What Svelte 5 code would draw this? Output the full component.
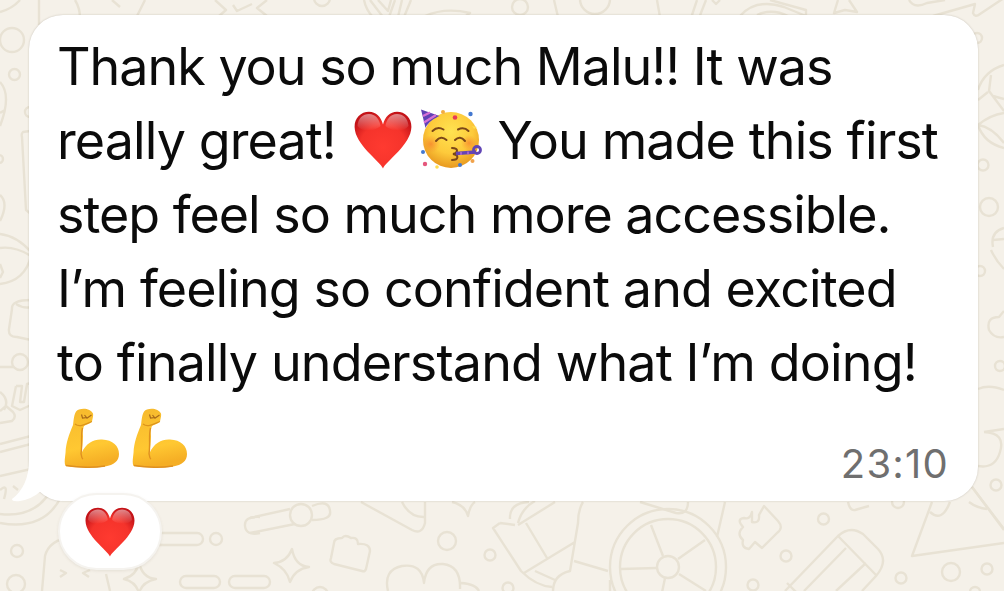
<script>
  const lines = [
    { spacing: -1, parts: [{ text: "Thank you so much Malu!! It was" }] },
    {
      spacing: -0.9,
      parts: [
        { text: "really great! " },
        { icon: "heart" },
        { icon: "party" },
        { text: " You made this first" },
      ],
    },
    { spacing: -1, parts: [{ text: "step feel so much more accessible." }] },
    { spacing: -0.91, parts: [{ text: "I’m feeling so confident and excited" }] },
    { spacing: -0.86, parts: [{ text: "to finally understand what I’m doing!" }] },
    { spacing: 0, parts: [{ icon: "arm" }, { icon: "arm" }] },
  ];

  const time = "23:10";

  // small circles of the wallpaper: x, y, radius
  const dots = [
    [12, 40, 12], [14.5, 74.5, 5.5], [30, 112, 5], [-1, 159, 4],
    [17, 551, 6], [16, 584, 9], [216, 539, 6], [447, 541, 9], [490, 555, 5.5],
    [508, 588, 5.5], [320, 595, 8], [823.5, 519, 5.5], [786, 556, 5.5],
    [753, 585, 5.5], [901, 578, 5.5], [951, 572, 9], [987, 569, 5.5],
    [898, 502, 6], [983, 165, 5.5], [989, 207, 9], [980, 271, 5],
    [1000, 366, 5], [996, 485, 5.5], [977, 38, 5], [322, -2, 8], [520, 7, 8],
    [595, -1, 15], [975, 592, 5],
  ];
</script>

{#snippet heart()}
  <svg class="heart" viewBox="0 0 58 58">
    <defs>
      <radialGradient id="heart-fill" cx="50%" cy="62%" r="62%">
        <stop offset="0" stop-color="#ff3a30" />
        <stop offset="0.65" stop-color="#f5332b" />
        <stop offset="1" stop-color="#c41318" />
      </radialGradient>
      <linearGradient id="heart-shine" x1="0" y1="0" x2="0" y2="1">
        <stop offset="0" stop-color="#fff" stop-opacity="0.5" />
        <stop offset="1" stop-color="#fff" stop-opacity="0" />
      </linearGradient>
    </defs>
    <path
      d="M29 57.5C26 50 1 34 .6 16 .4 7 7 .8 15 .8c7 0 12 5 14 12.600C31 5.800 36 .8 43 .8c8 0 14.600 6.200 14.400 15.200C57 34 32 50 29 57.500Z"
      fill="url(#heart-fill)" />
    <path
      d="M3.500 15C4 7 9 3 15 3c6.500 0 10.500 5 11.500 12-5 5-18 7-23 0ZM31.500 15C32.500 8 36.500 3 43 3c6 0 11 4 11.500 12-5 7-18 5-23 0Z"
      fill="url(#heart-shine)" />
  </svg>
{/snippet}

{#snippet party()}
  <svg class="party" viewBox="0 0 62 62">
    <defs>
      <radialGradient id="face-fill" cx="50%" cy="35%" r="65%">
        <stop offset="0" stop-color="#ffe351" />
        <stop offset="0.6" stop-color="#fdca3b" />
        <stop offset="1" stop-color="#e8981f" />
      </radialGradient>
      <radialGradient id="cheek">
        <stop offset="0" stop-color="#f6762c" stop-opacity="0.65" />
        <stop offset="1" stop-color="#f6862c" stop-opacity="0" />
      </radialGradient>
    </defs>
    <circle cx="31" cy="32" r="28" fill="url(#face-fill)" />
    <circle cx="11" cy="36" r="9" fill="url(#cheek)" />
    <circle cx="49" cy="35" r="8" fill="url(#cheek)" />
    <path d="M1 1.500 19.500 8C15 10 8 14 5.500 20Z" fill="#6042b5" />
    <path d="M3 8 10 4.500M4 14.500 16 7" stroke="#d770d6" stroke-width="2.200" />
    <g fill="none" stroke="#7b4718" stroke-width="2" stroke-linecap="round">
      <path d="M12.500 23q5-5 11-1.500M38 21.500q6-3 10.500 1.500" />
      <path d="M16 33q5-6 10.500-1M35 32q5-5 10 1" />
      <path d="M32 40c7 0 6 5 1 6 6 1 6 6-1 6" />
    </g>
    <path d="M36 45.500 56 44" stroke="#6744b4" stroke-width="3.600" />
    <circle cx="57" cy="42" r="3.500" fill="none" stroke="#6146b5" stroke-width="2.800" />
    <path d="M41 44v3M48 43.500v3" stroke="#b66bd1" stroke-width="1.500" />
    <circle cx="35" cy="9.500" r="2.300" fill="#e83b55" />
    <circle cx="50.500" cy="6" r="2.200" fill="#4478d0" />
    <circle cx="23" cy="4" r="2" fill="#f2ad43" />
    <path d="m52 18 5 1-3 2Z" fill="#ffdc4e" />
    <circle cx="3" cy="44" r="2" fill="#4478d0" />
    <circle cx="5" cy="56" r="2.200" fill="#e5577c" />
    <circle cx="40" cy="57" r="2" fill="#4478d0" />
    <circle cx="52.500" cy="53" r="2" fill="#f0a24b" />
    <circle cx="17" cy="59" r="1.800" fill="#ffdc4e" />
  </svg>
{/snippet}

{#snippet arm()}
  <svg class="arm" viewBox="0 0 56 60">
    <defs>
      <linearGradient id="skin" x1="0" y1="0" x2="0.2" y2="1">
        <stop offset="0" stop-color="#f6b92d" />
        <stop offset="0.7" stop-color="#ffc832" />
        <stop offset="1" stop-color="#f5ae25" />
      </linearGradient>
    </defs>
    <path
      d="M9 17C10 10 10 3 15 1.500c5-2 12-.5 14 4 .5 3-.5 5-1 8-2 2.500-5 2.500-8 4.500-1.500 4-1.500 6-1 10 0 6-1 12-1.500 17C22 35 30 31 38 31.500 49 32 55 38 55 46c0 7-5 11-14 12.500C31 60.500 12 59.500 1.500 58 0 55 1 50 1.500 45 2 34 5 27 9 17Z"
      fill="url(#skin)" />
    <path d="M18.500 20c-2 8 0 17-1.500 26 1 2 0 4 2 5M2 57.500c12 2 29 2 39 .5" fill="none" stroke="#df9020" stroke-width="1.400" />
    <path d="M11 16c5 4 10 0 17-2.500" fill="none" stroke="#dc941c" stroke-width="1.200" />
    <path d="M17.500 6.500 18.500 10l4-.5-2-2.500M22.500 10.500l5-3.500" fill="none" stroke="#a8691a" stroke-width="1.200" />
  </svg>
{/snippet}

<main>
  <svg class="wallpaper" viewBox="0 0 1004 591">
    {#each dots as [x, y, r]}
      <circle cx={x} cy={y} r={r} />
    {/each}

    <!-- top edge -->
    <path d="M0 12Q12 9 20 0M39 0v25M75 0q5 8 5 18M112 0l8 7M145 0l-8 16M215 0l11 10-7 6M267 0l-10 8 10 8M233 5l4 6 15-7" />
    <path d="M364 0q2 10 9 17M370 0l13 17M378 0l10 11 3-11M395 0l-6 17M402 0l-4 17M411 0l-7 17M425 16q20-9 45-3l-7 5" />
    <path d="M554 0l4 17M657 0l3 17M697 0l-6 18M706 0l-7 18M712 0l4 4 4-4M740 16q16-18 44-9l22 9M757 15q15-7 31 1M770 0l36 10v7M838 0l-4 13 11-3 12 2-8-12M909 0q5 9 18 3l18-3M933 16l42-12-2 9q2 5 7 1l24-16" />

    <!-- left edge -->
    <path d="M0 82q12 13 0 44M0 113l5-3M30 131l-7 1q-2 2-1 5l4 73 5 4M0 195q9 8 0 26M0 234q17 2 31 18" />
    <path d="M0 284q25-3 31-28-16-10-31-8M0 264l3 8-3 6M31 300q-20 0-19 9l-3 20q-1 8 8 8l14 3M16 304q8 5 15 3M0 367h13" />
    <circle cx="20" cy="362" r="8" />
    <path d="M0 392q10 8 4 18M16 386h6l-2 16h4l3-18 4-1M16 386l-4 20 8 4 11-5M0 411l6-5 7 6q4 5-1 9l-12 2M0 444l31-8M0 452l31-8M0 476l31-7M0 490q9-8 4 9M13 486l5 4M0 523q44 8 61-26M0 514q34 4 50-22" />

    <!-- right edge -->
    <path d="M1004 65q-20 6-26 25M1004 148q-20-5-26-23 12-10 26-12M991 75l-2 16 15 20M988 92l-10 8M993 96l11 3M978 125q14 2 26 18M1004 228q-14 4-11 19M1004 239l-11 1M991 250q5 11 13 19M1004 311l-5 6q-13 0-10 13 5 9 15 7M978 389q11-5 26 1M984 432q22 1 16 20-5 17-22 14M984 432l20-3M972 487l32 42" />

    <!-- bottom edge -->
    <rect x="150" y="533" width="53" height="12" rx="6" />
    <rect x="180" y="576" width="40" height="12" rx="6" />
    <rect x="229" y="576" width="41" height="12" rx="6" />
    <path d="M260 517q-16-1-15 9t15 7M42 591l3-35q4-16 26-19M60 570l6 3-6 4M90 570l-7 3 6 4M106 574l4 17M139 562q3 16 17 17-14 3-17 14-3-11-15-14 13-4 15-17Z" />
    <path d="M292 549q3 17 17 18-14 2-19 15-3-13-16-19 13-1 18-14ZM250 518l40-9M250 533l45-9M312 506q17-7 18 5 2 9-18 9" />
    <circle cx="301" cy="515" r="11" />
    <path d="M334 543q0-5 8-5 3-4 9 0 7-1 7 6 12-1 12 7l-4 18q-1 3-4 2l-28-7q-5-2-3-6Z" />
    <path d="M361 502l51 28q10 5 13-7v-21M402 502q8 16 23 15M452 502q13 3 16 14 2-11 7-14M388 591q-5-21 14-25 20-3 22 17 2-20 19-19 18 2 17 25M461 583q15 1 18 8M500 523l-7 5 28 43q15 15 31 16M500 523l15 2M510 519q-1-16 19-17M518 523q4-15 17-22M518 525l37-23M526 523l21 35M524 573l51-31M583 502q-5 8-5 21l-8 48q-17 4-17 20M574 561l34 10M535 571l20 9M640 502l36 11q12 2 12-11M725 502l-8 35" />
    <circle cx="668" cy="567" r="58" />
    <circle cx="668" cy="567" r="48" />
    <circle cx="668" cy="567" r="11" />
    <path d="M651 525l12 31M678 559l27-19M657 568l-36 1M665 578l-7 34M679 574l27 17M610 580v11" />
    <path d="M752 522q8 2 7-7l5-9 14 15q6 7-1 12l-15 15-7-6-6 7q-8-1-6-9-7-6 0-13-7-8 1-9 6 2 8-6ZM848 502q2 9 7 8l14-4" />
    <path d="M785 591l53-55q12-11 25-2l15 15q11 12-2 27l-14 15M838 536l38 39M804 591l42-43M836 591l30-28M787 583l10 10M932 502l-20 54 92-13M930 512q12 11 20-10M969 502q8 6 18 7M972 487l32 43" />
  </svg>

  <article class="bubble">
    <svg class="tail" viewBox="0 0 50 42">
      <path d="M17 0Q17 26 0 39q0 3 8 2 12-2 21-10 7 8 21 10V0Z" />
    </svg>
    <div class="message">
      {#each lines as line}
        <p style:letter-spacing="{line.spacing}px">
          {#each line.parts as part}
            {#if part.text}<span>{part.text}</span>
            {:else if part.icon === "heart"}{@render heart()}
            {:else if part.icon === "party"}{@render party()}
            {:else}{@render arm()}{/if}
          {/each}
        </p>
      {/each}
    </div>
    <time>{time}</time>
    <div class="reaction">{@render heart()}</div>
  </article>
</main>

<style>
  :global(body) {
    margin: 0;
  }

  main {
    position: relative;
    box-sizing: border-box;
    height: 591px;
    padding: 15px 26px 0 29px;
    overflow: hidden;
    background: #f5f1e9;
    font-family: Inter, "Noto Sans", sans-serif;
  }

  .wallpaper {
    position: absolute;
    inset: 0;
    width: 1004px;
    height: 591px;
    fill: none;
    stroke: #e8e2d4;
    stroke-width: 2.4;
    stroke-linejoin: round;
  }

  .bubble {
    position: relative;
    box-sizing: border-box;
    height: 486px;
    padding: 15px 28px;
    border-radius: 34px;
    background: #fff;
    box-shadow: 0 0 2px rgba(90, 80, 60, 0.3);
  }

  .tail {
    position: absolute;
    left: -17px;
    bottom: -1px;
    width: 50px;
    height: 42px;
    fill: #fff;
  }

  .message {
    position: relative;
  }

  p {
    display: flex;
    align-items: center;
    height: 74px;
    margin: 0;
    color: #0b0b0b;
    font-size: 52px;
    line-height: 74px;
    white-space: pre;
  }

  p svg {
    flex-shrink: 0;
  }

  .heart {
    width: 58px;
    height: 58px;
  }

  p .heart {
    margin: 0 0 2px 4px;
  }

  .party {
    width: 62px;
    height: 62px;
    margin: 0 2px 4px 8px;
  }

  .arm {
    width: 56px;
    height: 60px;
    margin: 2px 5px 0 7px;
  }

  time {
    position: absolute;
    right: 29px;
    bottom: 13px;
    color: #6f6f6f;
    font-size: 40px;
    line-height: 48px;
    letter-spacing: 1.2px;
  }

  .reaction {
    position: absolute;
    left: 29px;
    top: 478px;
    display: flex;
    align-items: center;
    justify-content: center;
    box-sizing: border-box;
    width: 104px;
    height: 77px;
    border: 2px solid #f5f3ef;
    border-radius: 39px;
    background: #fff;
    box-shadow: 0 1px 3px rgba(120, 105, 80, 0.12);
  }

  .reaction .heart {
    width: 50px;
    height: 50px;
  }
</style>
